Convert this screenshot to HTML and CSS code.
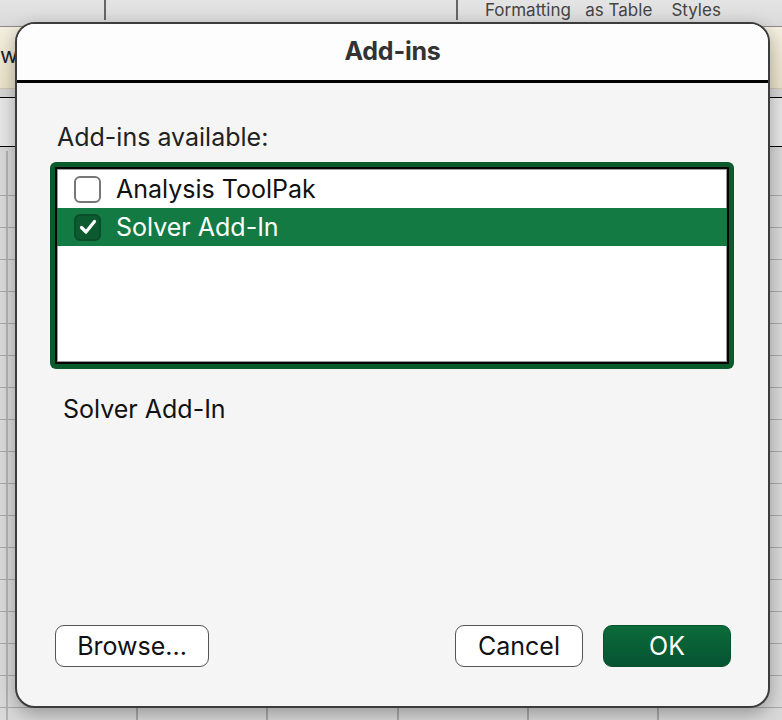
FILE: index.html
```html
<!DOCTYPE html>
<html lang="en">
<head>
    <meta charset="UTF-8">
    <meta name="viewport" content="width=device-width, initial-scale=1.0">
    <title>Add-ins</title>
    <link rel="stylesheet" href="styles.css">
</head>
<body>
    <!-- workbook behind the sheet dialog -->
    <div class="ribbon">
        <div class="ribbon-group g1"></div>
        <div class="ribbon-group g2"></div>
        <div class="ribbon-group g3">Formatting&nbsp;&nbsp;&nbsp;as Table&nbsp;&nbsp;&nbsp;&nbsp;Styles</div>
    </div>
    <div class="message-bar"><span class="message-text">wo</span></div>
    <div class="formula-bar"></div>
    <div class="sheet"></div>

    <div class="dialog">
        <div class="dialog-title">Add-ins</div>
        <div class="dialog-body">
            <div class="list-label">Add-ins available:</div>
            <div class="addin-list">
                <div class="addin-list-inner">
                    <label class="addin-row">
                        <span class="check"></span>
                        Analysis ToolPak
                    </label>
                    <label class="addin-row selected">
                        <span class="check checked">
                            <svg width="18" height="16" viewBox="0 0 18 16">
                                <path d="M2.5 8.5 L7 13 L15.5 2.5" fill="none" stroke="#fff" stroke-width="3.2" stroke-linecap="round" stroke-linejoin="round"/>
                            </svg>
                        </span>
                        Solver Add-In
                    </label>
                </div>
            </div>
            <div class="description">Solver Add-In</div>
        </div>
        <div class="dialog-footer">
            <button class="btn browse">Browse...</button>
            <div class="spacer"></div>
            <button class="btn">Cancel</button>
            <button class="btn primary">OK</button>
        </div>
    </div>
</body>
</html>
```

FILE: styles.css
```css
body {
    margin: 0;
    width: 782px;
    height: 720px;
    overflow: hidden;
    position: relative;
    background-color: #d6d6d6;
    font-family: Inter, "Liberation Sans", Arial, sans-serif;
}
.ribbon {
    height: 26px;
    display: flex;
    background: linear-gradient(#e4e4e4, #dadada);
    border-bottom: 1px solid #8a8a8a;
    overflow: hidden;
}
.ribbon-group {
    height: 20px;
    border-right: 2px solid #666;
}
.g1 { width: 104px; }
.g2 { width: 350px; }
.g3 {
    border-right: none;
    padding-left: 27px;
    font-size: 17px;
    color: #444;
    line-height: normal;
    white-space: nowrap;
}
.message-bar {
    height: 61px;
    background: linear-gradient(#f3eedf, #e9e1c8);
    border-bottom: 1px solid #cfc7b0;
}
.message-text {
    display: block;
    padding-top: 15px;
    font-size: 22px;
    color: #222;
}
.formula-bar {
    height: 48px;
    background-color: #e6e6e6;
    border-top: 1px solid #000;
    border-bottom: 1px solid #000;
    margin-top: 8px;
}
.sheet {
    height: 600px;
    margin-top: 4px;
    background-color: #d9d9d9;
    background-image:
        repeating-linear-gradient(to bottom, transparent 0, transparent 31px, #a9a9a9 31px, #a9a9a9 32px),
        repeating-linear-gradient(to right, transparent 0, transparent 6px, #b3b3b3 6px, #b3b3b3 8px, transparent 8px, transparent 136px, #a9a9a9 136px, #a9a9a9 138px, transparent 138px, transparent 266px, #a9a9a9 266px, #a9a9a9 268px, transparent 268px, transparent 397px, #a9a9a9 397px, #a9a9a9 399px, transparent 399px, transparent 527px, #a9a9a9 527px, #a9a9a9 529px, transparent 529px, transparent 657px, #a9a9a9 657px, #a9a9a9 659px, transparent 659px, transparent 782px);
    background-position: 0 13px, 0 0;
}

/* sheet dialog */
.dialog {
    position: absolute;
    left: 15px;
    top: 22px;
    width: 755px;
    height: 686px;
    box-sizing: border-box;
    border: 2px solid #3c3c3c;
    border-radius: 20px;
    background-color: #f5f5f5;
    overflow: hidden;
    display: flex;
    flex-direction: column;
    box-shadow: 0 6px 18px rgba(0,0,0,0.3);
}
.dialog-title {
    height: 56px;
    line-height: 54px;
    background-color: #fdfdfd;
    border-bottom: 3px solid #000;
    text-align: center;
    font-weight: bold;
    font-size: 25px;
    letter-spacing: -0.2px;
    color: #333;
}
.dialog-body {
    padding: 40px 33px 0 33px;
}
.list-label {
    padding-left: 7px;
    font-size: 25px;
    line-height: 28px;
    color: #222;
}
.addin-list {
    margin-top: 11px;
    width: 684px;
    height: 207px;
    box-sizing: border-box;
    padding: 5px;
    background-color: #0b5a2b;
    border-radius: 6px;
}
.addin-list-inner {
    height: 100%;
    box-sizing: border-box;
    border: 2px solid #050505;
    box-shadow: inset 0 0 0 1px #9a9a9a;
    background-color: #fff;
    padding-top: 1px;
}
.addin-row {
    display: flex;
    align-items: center;
    gap: 15px;
    height: 38px;
    padding-left: 17px;
    font-size: 25px;
    color: #111;
}
.addin-row.selected {
    background-color: #137a44;
    color: #fff;
}
.check {
    width: 23px;
    height: 23px;
    border: 2px solid #777;
    border-radius: 6px;
    background-color: #fff;
    display: flex;
    align-items: center;
    justify-content: center;
}
.check.checked {
    background-color: #0c5a30;
    border-color: #0a4d28;
}
.description {
    margin-top: 26px;
    padding-left: 13px;
    font-size: 25px;
    line-height: 28px;
    color: #111;
}
.dialog-footer {
    margin-top: auto;
    display: flex;
    gap: 20px;
    padding: 0 37px 39px 38px;
}
.spacer {
    flex: 1;
}
.btn {
    height: 42px;
    width: 128px;
    padding: 0;
    background-color: #fff;
    border: 1.5px solid #555;
    border-radius: 9px;
    font-family: Inter, "Liberation Sans", Arial, sans-serif;
    font-size: 25px;
    color: #111;
}
.btn.browse {
    width: 154px;
}
.btn.primary {
    background: linear-gradient(#0b6b3a, #065331);
    border-color: #075330;
    color: #fff;
}
```
